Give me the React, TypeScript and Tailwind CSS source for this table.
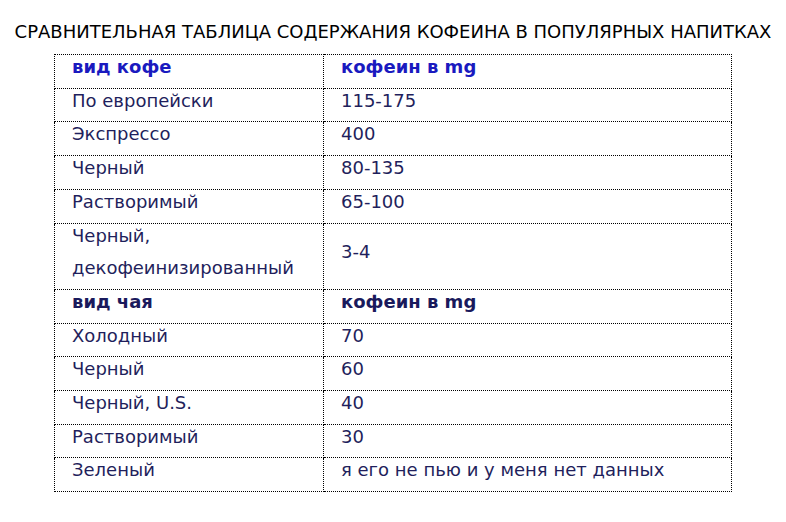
import React from 'react';

type Row = { name: string; value: string; header?: 'coffee' | 'tea' };

const rows: Row[] = [
  { name: 'вид кофе', value: 'кофеин в mg', header: 'coffee' },
  { name: 'По европейски', value: '115-175' },
  { name: 'Экспрессо', value: '400' },
  { name: 'Черный', value: '80-135' },
  { name: 'Растворимый', value: '65-100' },
  { name: 'Черный, декофеинизированный', value: '3-4' },
  { name: 'вид чая', value: 'кофеин в mg', header: 'tea' },
  { name: 'Холодный', value: '70' },
  { name: 'Черный', value: '60' },
  { name: 'Черный, U.S.', value: '40' },
  { name: 'Растворимый', value: '30' },
  { name: 'Зеленый', value: 'я его не пью и у меня нет данных' },
];

const App: React.FC = () => {
  return (
    <div className="min-h-[522px] w-[786px] bg-white font-['DejaVu_Sans',sans-serif]">
      <h1 className="pt-[20px] text-center text-[18px] leading-[24px] text-black">
        СРАВНИТЕЛЬНАЯ ТАБЛИЦА СОДЕРЖАНИЯ КОФЕИНА В ПОПУЛЯРНЫХ НАПИТКАХ
      </h1>
      <table className="mx-auto mt-[10px] w-[678px] border-collapse text-[18px] leading-[32.7px] text-[#1f1f5c]">
        <tbody>
          {rows.map((row, i) => {
            const headClass =
              row.header === 'coffee'
                ? 'font-bold text-[#1a1abf]'
                : row.header === 'tea'
                  ? 'font-bold text-[#1a1a5c]'
                  : '';
            return (
              <tr key={i}>
                <td className={`w-[269px] border border-dotted border-black py-0 pl-[17px] pr-2 align-middle ${headClass}`}>
                  <span className="align-[4px] leading-[20px]">
                    {row.name === 'Черный, декофеинизированный' ? (
                      <>
                        Черный,
                        <br />
                        декофеинизированный
                      </>
                    ) : (
                      row.name
                    )}
                  </span>
                </td>
                <td className={`border border-dotted border-black py-0 pl-[17px] pr-2 align-middle ${headClass}`}>
                  <span className="align-[4px] leading-[20px]">{row.value}</span>
                </td>
              </tr>
            );
          })}
        </tbody>
      </table>
    </div>
  );
};

export default App;
